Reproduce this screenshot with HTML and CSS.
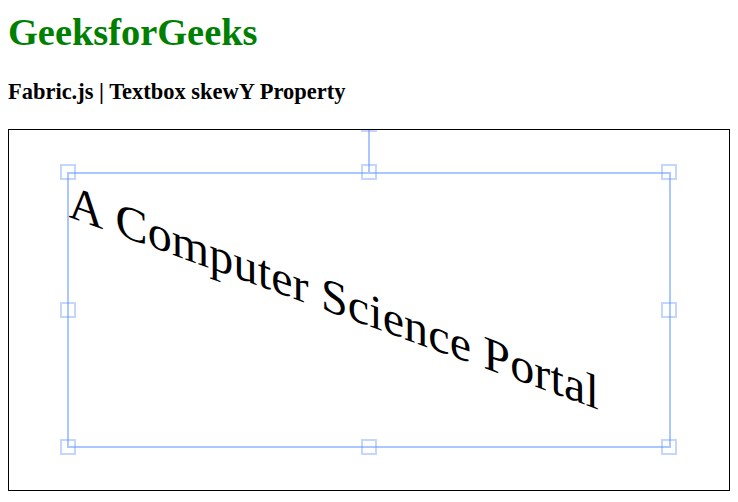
FILE: index.html
```html
<!DOCTYPE html>
<html>
<head>
<meta charset="utf-8">
<link rel="stylesheet" href="styles.css">
</head>
<body>
  <h1 class="title">GeeksforGeeks</h1>
  <h3 class="subtitle">Fabric.js | Textbox skewY Property</h3>
  <div class="canvas">
    <div class="textobj"><span class="textline">A Computer Science Portal</span></div>
    <div class="bbox"></div>
    <div class="mtr-line"></div>
    <div class="ctl ctl-mtr"></div>
    <div class="ctl ctl-tl"></div>
    <div class="ctl ctl-mt"></div>
    <div class="ctl ctl-tr"></div>
    <div class="ctl ctl-ml"></div>
    <div class="ctl ctl-mr"></div>
    <div class="ctl ctl-bl"></div>
    <div class="ctl ctl-mb"></div>
    <div class="ctl ctl-br"></div>
  </div>
</body>
</html>
```
FILE: styles.css
```css
html, body {
  margin: 0;
  padding: 0;
  background: #ffffff;
}
body {
  padding: 0 8px;
  font-family: "Liberation Serif", "Times New Roman", serif;
  display: flow-root;
}
.title {
  margin: 10px 0 0;
  font-size: 38.4px;
  line-height: 44px;
  font-weight: bold;
  color: #008000;
}
.subtitle {
  margin: 25.4px 0 0;
  font-size: 22.46px;
  line-height: 26px;
  font-weight: bold;
  color: #000000;
}
.canvas {
  margin-top: 23.6px;
  width: 720px;
  height: 360px;
  border: 1px solid #000000;
  position: relative;
  overflow: hidden;
}
.textobj {
  position: absolute;
  left: 59.4px;
  top: 152.28px;
  width: 601.2px;
  height: 55.44px;
  box-sizing: border-box;
  padding: 0.6px;
  transform: skewY(20deg);
  transform-origin: 50% 50%;
}
.textline {
  display: block;
  font-family: "Liberation Serif", "Times New Roman", serif;
  font-size: 48px;
  line-height: 54.24px;
  white-space: nowrap;
  font-kerning: none;
  letter-spacing: 0.15px;
  color: #000000;
}
.bbox {
  position: absolute;
  left: 58px;
  top: 42px;
  width: 604px;
  height: 276px;
  box-sizing: border-box;
  border: 2px solid rgba(102, 153, 255, 0.55);
}
.mtr-line {
  position: absolute;
  left: 359px;
  top: 0;
  width: 2px;
  height: 42px;
  background: rgba(102, 153, 255, 0.55);
}
.ctl {
  position: absolute;
  width: 16px;
  height: 16px;
  box-sizing: border-box;
  border: 2px solid rgba(102, 153, 255, 0.4);
}
.ctl-mtr { left: 352px; top: -14px; }
.ctl-tl { left: 51px; top: 34px; }
.ctl-mt { left: 352px; top: 34px; }
.ctl-tr { left: 652px; top: 34px; }
.ctl-ml { left: 51px; top: 172px; }
.ctl-mr { left: 652px; top: 172px; }
.ctl-bl { left: 51px; top: 309px; }
.ctl-mb { left: 352px; top: 309px; }
.ctl-br { left: 652px; top: 309px; }
```
